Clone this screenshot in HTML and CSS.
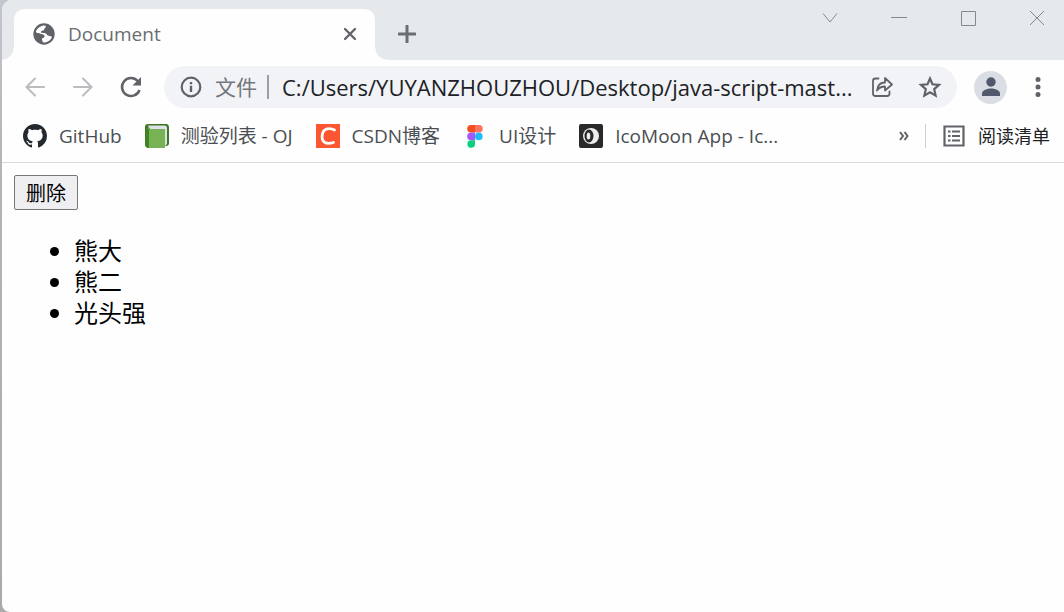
FILE: index.html
```
<!DOCTYPE html>
<html lang="zh-CN">
  <head>
    <meta charset="UTF-8" />
    <meta name="viewport" content="width=device-width, initial-scale=1.0" />
    <title>Document</title>
    <link rel="stylesheet" href="styles.css">
  </head>
  <body>
    <div class="window">
      <header class="tabstrip">
        <div class="tab">
          <svg class="globe" viewBox="0 0 22 22">
            <circle cx="11" cy="11" r="10.700" fill="#5f6368" />
            <path d="M10.500 2.600C8 3 4 5 2.800 9C4 10.500 6 10 7 10.500C8.500 11.300 10.500 11 11.500 12.500C12 14 10.500 15 9 15.500C9 17.500 9.500 19 10.500 19.500C15 19.500 18 16.800 19 14C17.500 12.500 15.500 13.200 14 12C13.400 9.800 11.500 10.200 8 9.800C7.500 8 9 7.500 10.500 7.500C11.500 7 10.800 5.500 12 5C13 4.500 12.800 3.500 12.500 2.700Z" fill="#fff" />
          </svg>
          <span class="tab-title">Document</span>
          <button class="tab-close" aria-label="关闭">
            <svg width="14" height="14" viewBox="0 0 14 14"><path d="M2 2L12 12M12 2L2 12" stroke="#5f6368" stroke-width="2.300" stroke-linecap="round" /></svg>
          </button>
        </div>
        <button class="new-tab" aria-label="新标签页">
          <svg width="18" height="18" viewBox="0 0 18 18"><path d="M9 1V17M1 9H17" stroke="#6a6d71" stroke-width="3" stroke-linecap="round" /></svg>
        </button>
        <div class="window-controls">
          <button aria-label="搜索标签页"><svg viewBox="0 0 16 16"><path d="M1 3.500L8 12L15 3.500" /></svg></button>
          <button aria-label="最小化"><svg viewBox="0 0 16 16"><path d="M0 7.500H16" /></svg></button>
          <button aria-label="最大化"><svg viewBox="0 0 16 16"><path d="M1.500 1.500H15.500V15.500H1.500Z" /></svg></button>
          <button aria-label="关闭窗口"><svg viewBox="0 0 16 16"><path d="M1 1L15 15M15 1L1 15" /></svg></button>
        </div>
      </header>

      <nav class="toolbar">
        <button class="icon-btn" aria-label="后退">
          <svg viewBox="0 0 24 24" class="faded"><path d="M21 12H4M12 3.500L3.500 12L12 20.500" /></svg>
        </button>
        <button class="icon-btn" aria-label="前进">
          <svg viewBox="0 0 24 24" class="faded"><path d="M3 12H20M12 3.500L20.500 12L12 20.500" /></svg>
        </button>
        <button class="icon-btn" aria-label="刷新">
          <svg viewBox="0 0 24 24"><path d="M20.500 15A9 9 0 1 1 18.700 6" fill="none" stroke="#5f6368" stroke-width="2.500" /><path d="M22 2V10.500H13.500Z" fill="#5f6368" /></svg>
        </button>
        <div class="omnibox">
          <svg class="info" viewBox="0 0 22 22">
            <circle cx="11" cy="11" r="9.300" fill="none" stroke="#5f6368" stroke-width="2.200" />
            <path d="M9.800 9.800H12.200V16H9.800ZM9.800 6H12.200V8.200H9.800Z" fill="#5f6368" />
          </svg>
          <label class="scheme" for="url">文件</label>
          <input class="url" id="url" type="text" value="C:/Users/YUYANZHOUZHOU/Desktop/java-script-mast...">
          <button class="icon-btn" aria-label="分享">
            <svg viewBox="0 0 24 24"><path d="M8.500 3.500H5.500Q3 3.500 3 6V18.500Q3 21 5.500 21H17Q19.500 21 19.500 18.500V16.500M7 15.500C7.500 10.500 10.500 7.500 15 7.500V3L22 9.500L15 15.500V11.500C11.500 11.500 9 12.500 7 15.500Z" fill="none" stroke="#5f6368" stroke-width="1.800" stroke-linejoin="round" stroke-linecap="round" /></svg>
          </button>
          <button class="icon-btn" aria-label="收藏">
            <svg viewBox="0 0 24 24"><path d="M12 3.500L14.500 9.300L21 9.900L16.200 14.200L17.600 20.600L12 17.200L6.400 20.600L7.800 14.200L3 9.900L9.500 9.300Z" fill="none" stroke="#5f6368" stroke-width="2.200" /></svg>
          </button>
        </div>
        <button class="avatar" aria-label="用户">
          <svg viewBox="0 0 20 20"><circle cx="10" cy="5" r="4.700" fill="#4f596b" /><path d="M1 19V16.500C1 13 6.500 11.500 10 11.500S19 13 19 16.500V19Z" fill="#4f596b" /></svg>
        </button>
        <button class="menu" aria-label="菜单">
          <svg width="6" height="20" viewBox="0 0 6 20"><circle cx="3" cy="2.500" r="2.500" /><circle cx="3" cy="10" r="2.500" /><circle cx="3" cy="17.500" r="2.500" /></svg>
        </button>
      </nav>

      <nav class="bookmarks">
        <a class="bookmark" href="#">
          <svg viewBox="0 0 16 16"><path fill="#24292f" d="M8 0C3.580 0 0 3.580 0 8c0 3.540 2.290 6.530 5.470 7.590.4.070.55-.17.55-.38 0-.19-.01-.82-.01-1.490-2.010.37-2.530-.49-2.690-.94-.09-.23-.48-.94-.82-1.130-.28-.15-.68-.52-.01-.53.63-.01 1.080.58 1.230.82.72 1.210 1.870.87 2.330.66.07-.52.28-.87.51-1.070-1.780-.2-3.640-.89-3.640-3.950 0-.87.31-1.590.82-2.150-.08-.2-.36-1.020.08-2.120 0 0 .67-.21 2.200.82.64-.18 1.320-.27 2-.27s1.360.09 2 .27c1.530-1.040 2.200-.82 2.200-.82.44 1.100.16 1.920.08 2.120.51.56.82 1.270.82 2.150 0 3.070-1.870 3.750-3.650 3.950.29.25.54.73.54 1.480 0 1.070-.01 1.930-.01 2.200 0 .21.15.46.55.38A8.010 8.010 0 0 0 16 8c0-4.420-3.580-8-8-8z" /></svg>
          GitHub
        </a>
        <a class="bookmark" href="#">
          <svg viewBox="0 0 24 24">
            <path d="M3 0H22Q24 1 24 3V19Q24 22 21 22H5Z" fill="#3f7524" />
            <path d="M3 1.500H20Q22 1.500 22 4V20L20 22V5H5Z" fill="#dce3e8" />
            <path d="M0 3Q0 0 3 0V24Q1 24 0 21Z" fill="#3f7524" />
            <path d="M2.500 3.500Q3 5 6 5H20V24H3Q1 24 1 21Z" fill="#77b255" />
            <path d="M1 4L4 5V24Q1 24 0 21Z" fill="#3f8424" />
          </svg>
          测验列表 - OJ
        </a>
        <a class="bookmark" href="#">
          <svg viewBox="0 0 24 24"><path d="M0 0H24V24H0Z" fill="#fc5531" /><path d="M18.500 6C14 3.500 7.500 4 6.300 10.500C5 17.500 9.500 21 17.500 18.500" fill="none" stroke="#fff" stroke-width="2.800" stroke-linecap="round" /></svg>
          CSDN博客
        </a>
        <a class="bookmark" href="#">
          <svg viewBox="0 0 24 24">
            <path d="M12 1H8A3.800 3.800 0 0 0 8 8.600H12Z" fill="#f24e1e" />
            <path d="M12 1H16A3.800 3.800 0 0 1 16 8.600H12Z" fill="#ff7262" />
            <path d="M12 8.600H8A3.800 3.800 0 0 0 8 16.200H12Z" fill="#a259ff" />
            <circle cx="15.800" cy="12.400" r="3.800" fill="#1abcfe" />
            <path d="M12 16.200H8A3.800 3.800 0 1 0 12 20Z" fill="#0acf83" />
          </svg>
          UI设计
        </a>
        <a class="bookmark" href="#">
          <svg viewBox="0 0 24 24"><rect width="24" height="24" rx="2" fill="#292929" /><circle cx="12" cy="12" r="8" fill="#eee" /><ellipse cx="10" cy="12" rx="4.500" ry="6.500" fill="#292929" /><ellipse cx="9.500" cy="12" rx="1.800" ry="3.500" fill="#eee" /></svg>
          IcoMoon App - Ic...
        </a>
        <button class="more" aria-label="更多书签">
          <svg width="10" height="10" viewBox="0 0 10 10"><path d="M1 1L4 5L1 9M5.500 1L8.500 5L5.500 9" fill="none" stroke="#5f6368" stroke-width="2" /></svg>
        </button>
        <button class="reading-list">
          <svg viewBox="0 0 24 24"><path d="M2.500 2.500H21.500V21.500H2.500Z" fill="none" stroke="#5f6368" stroke-width="2.200" /><path d="M6 7.500H8.500M10 7.500H18M6 12H8.500M10 12H18M6 16.500H8.500M10 16.500H18" stroke="#5f6368" stroke-width="2" /></svg>
          阅读清单
        </button>
      </nav>

      <main class="page">
        <button class="delete">删除</button>
        <ul class="list">
          <li>熊大</li>
          <li>熊二</li>
          <li>光头强</li>
        </ul>
      </main>
    </div>
  </body>
</html>
```
FILE: styles.css
```
* {
  box-sizing: border-box;
}
body {
  margin: 0;
  padding-left: 2px;
  background: linear-gradient(#c3c6cf, #b5b5b8 25%, #aaa);
  font-family: "Open Sans", "Noto Sans CJK SC", sans-serif;
}
button {
  padding: 0;
  border: none;
  background: none;
  font-family: inherit;
}
svg {
  display: block;
  flex-shrink: 0;
}
.window {
  display: flex;
  flex-direction: column;
  min-height: 100vh;
  background-color: #fefefe;
  border-radius: 10px 0 0 8px;
  overflow: hidden;
}

/* tabs */
.tabstrip {
  display: flex;
  height: 60px;
  padding: 9px 0 0 12px;
  background-color: #e5e9ec;
}
.tab {
  position: relative;
  display: flex;
  align-items: center;
  width: 361px;
  padding: 0 18px 2px 19px;
  background-color: #fefefe;
  border-radius: 10px 10px 0 0;
}
.tab::before,
.tab::after {
  content: "";
  position: absolute;
  bottom: 0;
  width: 12px;
  height: 12px;
}
.tab::before {
  right: 100%;
  background: radial-gradient(circle at 0 0, #e5e9ec 11px, #fefefe 12px);
}
.tab::after {
  left: 100%;
  background: radial-gradient(circle at 100% 0, #e5e9ec 11px, #fefefe 12px);
}
.globe {
  width: 22px;
  height: 22px;
}
.tab-title {
  flex: 1;
  padding-left: 13px;
  font-size: 19px;
  color: #696d72;
}
.new-tab {
  padding: 0 23px 2px;
}
.window-controls {
  display: flex;
  align-items: flex-start;
  gap: 53px;
  margin-left: auto;
  padding-right: 19px;
}
.window-controls svg {
  width: 16px;
  height: 18px;
  fill: none;
  stroke: #85888b;
  stroke-width: 1;
}

/* toolbar */
.toolbar {
  display: flex;
  align-items: center;
  height: 54px;
  padding: 0 23px 0 21px;
}
.icon-btn svg {
  width: 24px;
  height: 24px;
}
.toolbar > .icon-btn {
  margin-right: 24px;
}
.faded {
  fill: none;
  stroke: #babcc0;
  stroke-width: 2;
  stroke-linecap: round;
}
.omnibox {
  flex: 1;
  display: flex;
  align-items: center;
  min-width: 0;
  height: 42px;
  margin-left: -3px;
  padding: 0 15px 0 16px;
  background-color: #f1f3f7;
  border-radius: 21px;
}
.info {
  width: 22px;
  height: 22px;
}
.scheme {
  margin-left: 13px;
  padding-right: 10px;
  border-right: 2px solid #9b9da1;
  font-size: 21px;
  line-height: 24px;
  color: #73767b;
}
.url {
  flex: 1;
  min-width: 0;
  padding: 0 0 0 13px;
  border: none;
  outline: none;
  background: none;
  font-family: inherit;
  font-size: 22px;
  color: #202124;
}
.omnibox .icon-btn + .icon-btn {
  margin-left: 24px;
}
.avatar {
  display: flex;
  align-items: center;
  justify-content: center;
  width: 33px;
  height: 33px;
  margin-left: 17px;
  background-color: #dadde4;
  border-radius: 50%;
}
.avatar svg {
  width: 20px;
  height: 20px;
}
.menu {
  margin-left: 28px;
  fill: #5f6368;
}

/* bookmarks */
.bookmarks {
  display: flex;
  align-items: center;
  gap: 23px;
  height: 49px;
  padding: 0 14px 5px 21px;
  border-bottom: 1px solid #d8dadc;
  white-space: nowrap;
}
.bookmark,
.reading-list {
  display: flex;
  align-items: center;
  gap: 12px;
  font-size: 19px;
  line-height: 24px;
  color: #4a4e52;
  text-decoration: none;
}
.bookmark svg,
.reading-list svg {
  width: 24px;
  height: 24px;
}
.more {
  margin-left: auto;
  margin-right: -7px;
}
.reading-list {
  padding-left: 16px;
  border-left: 1px solid #c8d0d6;
  font-size: 18px;
  color: #202124;
}

/* page */
.page {
  padding: 12px;
}
.delete {
  display: block;
  width: 64px;
  height: 35px;
  border: 1px solid #777;
  border-radius: 2px;
  background-color: #efeff1;
  font-size: 20px;
  color: #000;
}
.delete:hover {
  background-color: #e3e3e5;
}
.list {
  margin: 25px 0;
  padding-left: 60px;
  font-size: 24px;
  line-height: 31px;
  color: #000;
}
```
